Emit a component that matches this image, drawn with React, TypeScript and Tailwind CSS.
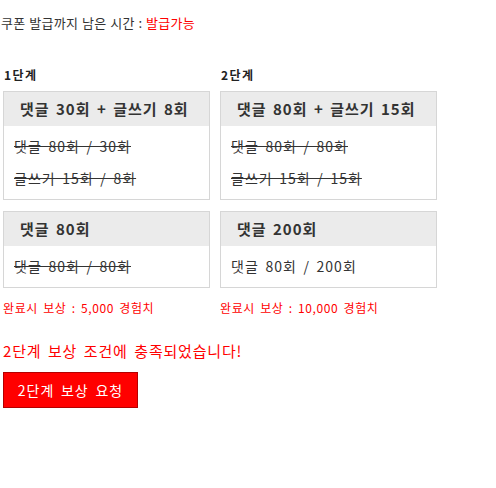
import React from "react";

const font = { fontFamily: '"Noto Sans CJK KR", "Noto Sans", sans-serif' };

function Box({ title, lines }: { title: string; lines: { text: string; done: boolean }[] }) {
  return (
    <div className="border border-[#d6d6d6] bg-white w-full">
      <div className="h-[34px] bg-[#ebebeb] pl-[16px] flex items-center whitespace-nowrap text-[15px] font-bold text-[#333] tracking-[1px] [word-spacing:2px]">
        {title}
      </div>
      <div className="pt-[4px] pb-[5px] pl-[10px]">
        {lines.map((l, i) => (
          <div
            key={i}
            className={`leading-[32px] text-[14px] text-[#333] whitespace-nowrap tracking-[1px] [word-spacing:2.5px] ${l.done ? "line-through" : ""}`}
          >
            {l.text}
          </div>
        ))}
      </div>
    </div>
  );
}

export default function App() {
  return (
    <div className="w-[496px] h-[488px] bg-white pl-[1px]" style={font}>
      <div className="pt-[15px] text-[13px] leading-[16px] text-[#333] tracking-[0.3px] [word-spacing:0.5px]">
        쿠폰 발급까지 남은 시간 : <span className="text-[#ff0000]">발급가능</span>
      </div>
      <div className="mt-[36px] flex gap-[10px] pl-[2px]">
        <div className="w-[207px] flex flex-col">
          <div className="text-[12px] font-bold leading-[16px] text-[#222] pl-[1px] mb-[8px] tracking-[1.5px]">1단계</div>
          <Box
            title="댓글 30회 + 글쓰기 8회"
            lines={[
              { text: "댓글 80회 / 30회", done: true },
              { text: "글쓰기 15회 / 8회", done: true },
            ]}
          />
          <div className="mt-[11px]">
            <Box title="댓글 80회" lines={[{ text: "댓글 80회 / 80회", done: true }]} />
          </div>
          <div className="mt-[12px] text-[12px] leading-[16px] text-[#ff0000] tracking-[0.6px] [word-spacing:2px]">
            완료시 보상 : 5,000 경험치
          </div>
        </div>
        <div className="w-[217px] flex flex-col">
          <div className="text-[12px] font-bold leading-[16px] text-[#222] pl-[1px] mb-[8px] tracking-[1.5px]">2단계</div>
          <Box
            title="댓글 80회 + 글쓰기 15회"
            lines={[
              { text: "댓글 80회 / 80회", done: true },
              { text: "글쓰기 15회 / 15회", done: true },
            ]}
          />
          <div className="mt-[11px]">
            <Box title="댓글 200회" lines={[{ text: "댓글 80회 / 200회", done: false }]} />
          </div>
          <div className="mt-[12px] text-[12px] leading-[16px] text-[#ff0000] tracking-[0.6px] [word-spacing:2px]">
            완료시 보상 : 10,000 경험치
          </div>
        </div>
      </div>
      <div className="mt-[26px] pl-[2px] text-[15px] leading-[18px] text-[#ff0000] tracking-[0.8px] [word-spacing:2.5px]">
        2단계 보상 조건에 충족되었습니다!
      </div>
      <button className="mt-[12px] ml-[2px] w-[135px] h-[36px] bg-[#ff0000] border border-[#b30000] text-white text-[14px] tracking-[1px] [word-spacing:2.5px] flex items-center justify-center">
        2단계 보상 요청
      </button>
    </div>
  );
}
